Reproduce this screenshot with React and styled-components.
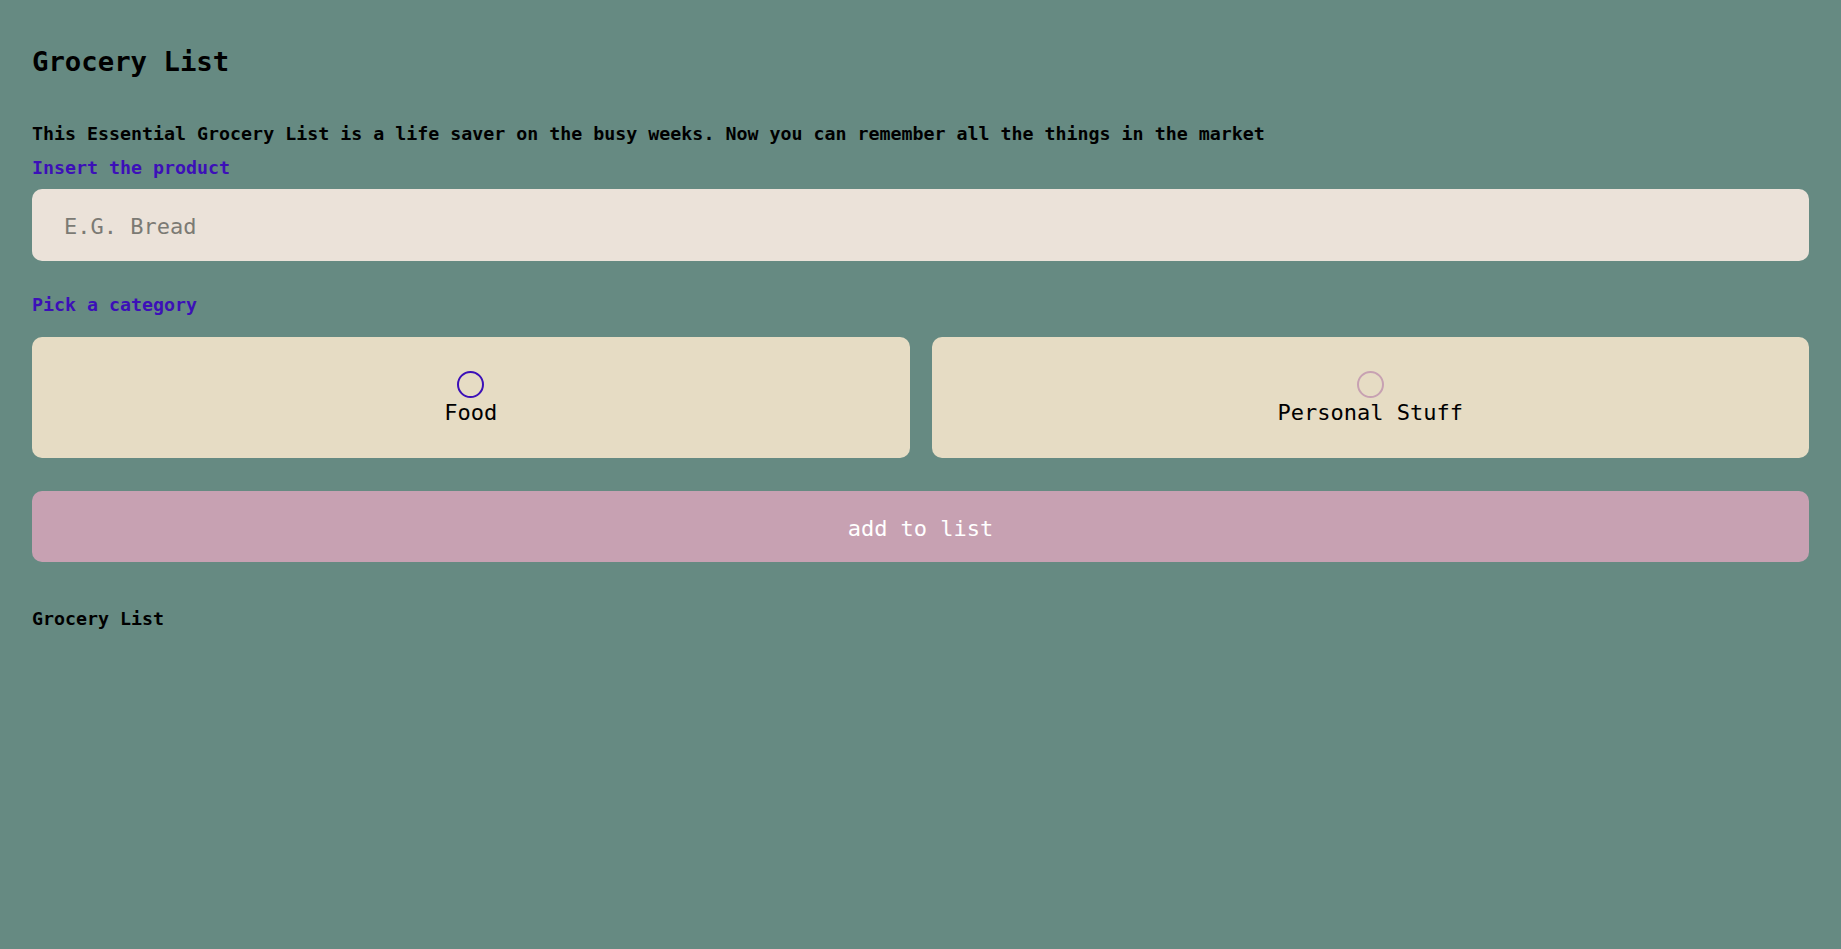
import React from "react";
import styled, { createGlobalStyle } from "styled-components";

const GlobalStyle = createGlobalStyle`
  html, body {
    margin: 0;
    padding: 0;
    background: #668a82;
  }
  body {
    font-family: "DejaVu Sans Mono", "Liberation Mono", monospace;
    color: #000;
  }
  * { box-sizing: border-box; }
`;

const Page = styled.main`
  padding: 46px 32px 40px;
  display: flex;
  flex-direction: column;
`;

const Title = styled.h1`
  margin: 0;
  font-size: 27.3px;
  line-height: 32px;
  font-weight: 700;
`;

const Description = styled.p`
  margin: 45px 0 0;
  font-size: 18.3px;
  line-height: 22px;
  font-weight: 700;
`;

const FieldLabel = styled.label`
  display: block;
  margin-top: ${(p) => p.$gap}px;
  font-size: 18.3px;
  line-height: 22px;
  font-weight: 700;
  color: #3c10b8;
`;

const TextInput = styled.input`
  display: block;
  width: 100%;
  height: 72px;
  margin-top: 10px;
  padding: 2px 31px 0 32px;
  border: none;
  border-radius: 10px;
  background: #ebe2d9;
  font-family: inherit;
  font-size: 22px;
  color: #000;
  outline: none;
  &::placeholder {
    color: #7b7a74;
  }
`;

const CategoryGrid = styled.div`
  margin-top: 21px;
  display: grid;
  grid-template-columns: 1fr 1fr;
  gap: 22px;
`;

const CategoryCard = styled.label`
  height: 121px;
  border-radius: 10px;
  background: #e6dcc4;
  display: flex;
  flex-direction: column;
  align-items: center;
  justify-content: center;
  cursor: pointer;
  font-size: 22px;
  line-height: 26px;
  padding: 4px 0 2px;
`;

const RadioDot = styled.input.attrs({ type: "radio" })`
  appearance: none;
  margin: 0 0 2px;
  width: 27px;
  height: 27px;
  border-radius: 50%;
  border: 2px solid ${(p) => p.$ring};
  background: transparent;
`;

const AddButton = styled.button`
  margin-top: 33px;
  height: 71px;
  width: 100%;
  padding: 3px 0 0;
  border: none;
  border-radius: 10px;
  background: #c7a1b2;
  color: #fff;
  font-family: inherit;
  font-size: 22px;
  cursor: pointer;
`;

const ListHeading = styled.h2`
  margin: 46px 0 0;
  font-size: 18.3px;
  line-height: 22px;
  font-weight: 700;
`;

const categories = [
  { id: "food", label: "Food", ring: "#3c10b8" },
  { id: "personal", label: "Personal Stuff", ring: "#c7a1b2" },
];

export default function App() {
  return (
    <>
      <GlobalStyle />
      <Page>
        <Title>Grocery List</Title>
        <Description>
          This Essential Grocery List is a life saver on the busy weeks. Now you can remember all the things in the market
        </Description>
        <FieldLabel htmlFor="product" $gap={12}>Insert the product</FieldLabel>
        <TextInput id="product" placeholder="E.G. Bread" />
        <FieldLabel as="div" $gap={33}>Pick a category</FieldLabel>
        <CategoryGrid>
          {categories.map((c) => (
            <CategoryCard key={c.id}>
              <RadioDot name="category" value={c.id} $ring={c.ring} />
              <span>{c.label}</span>
            </CategoryCard>
          ))}
        </CategoryGrid>
        <AddButton>add to list</AddButton>
        <ListHeading>Grocery List</ListHeading>
      </Page>
    </>
  );
}
